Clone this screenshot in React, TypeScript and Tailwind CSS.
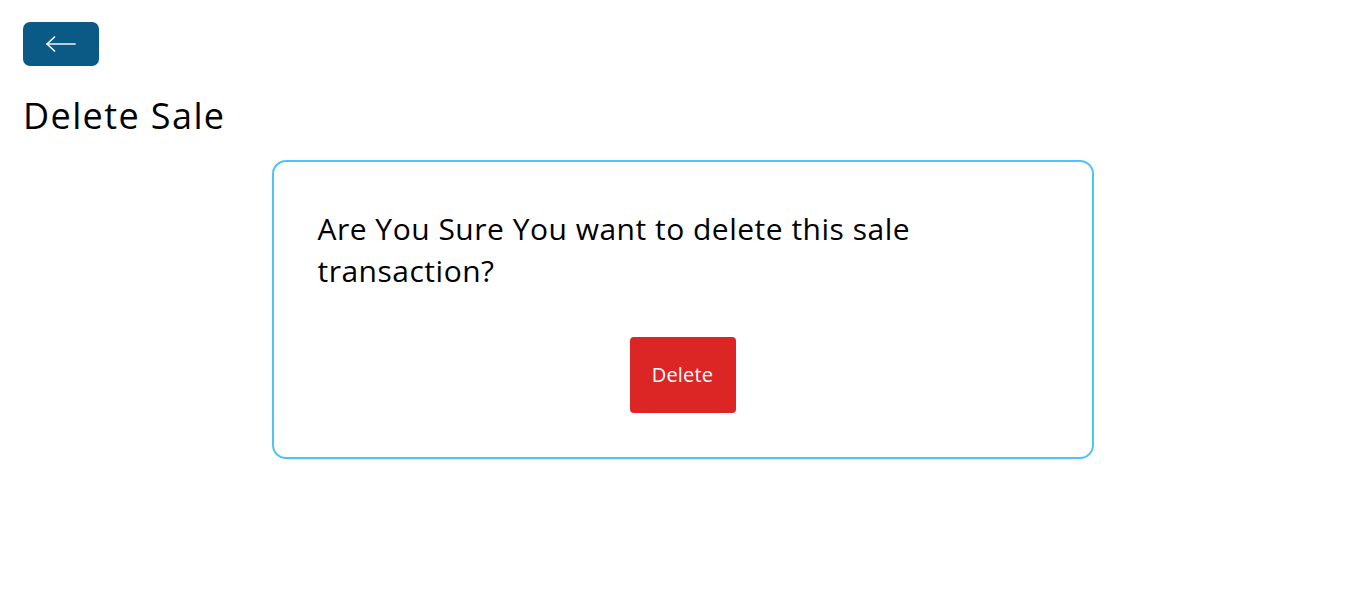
import React from "react";

export default function App() {
  return (
    <div className="min-h-screen bg-white p-[23px] pt-[22px] text-black" style={{ fontFamily: '"Open Sans", "Noto Sans", sans-serif' }}>
      <div className="flex">
        <button className="flex h-[44px] w-[76px] items-center justify-center rounded-[7px] bg-[#0a5a85]">
          <svg width="30" height="16" viewBox="0 0 30 16" fill="none" stroke="#f0f4f7" strokeWidth="1.7" strokeLinecap="round" strokeLinejoin="round">
            <path d="M1 8 H29" />
            <path d="M8.5 1 L1 8 L8.5 15" />
          </svg>
        </button>
      </div>
      <h1 className="mt-[30px] text-[36px] leading-[40px] tracking-[1.4px]">Delete Sale</h1>
      <div className="mx-auto mt-[24px] flex w-[822px] flex-col items-center rounded-[14px] border-2 border-[#4fc3f7] px-[44px] pt-[46px] pb-[44px]">
        <h3 className="self-stretch text-[30px] leading-[42px] tracking-[0.5px]">
          Are You Sure You want to delete this sale transaction?
        </h3>
        <button className="mt-[45px] flex h-[76px] w-[106px] items-center justify-center rounded-[4px] bg-[#dc2626] text-[20px] tracking-[0.2px] text-white">
          Delete
        </button>
      </div>
    </div>
  );
}
